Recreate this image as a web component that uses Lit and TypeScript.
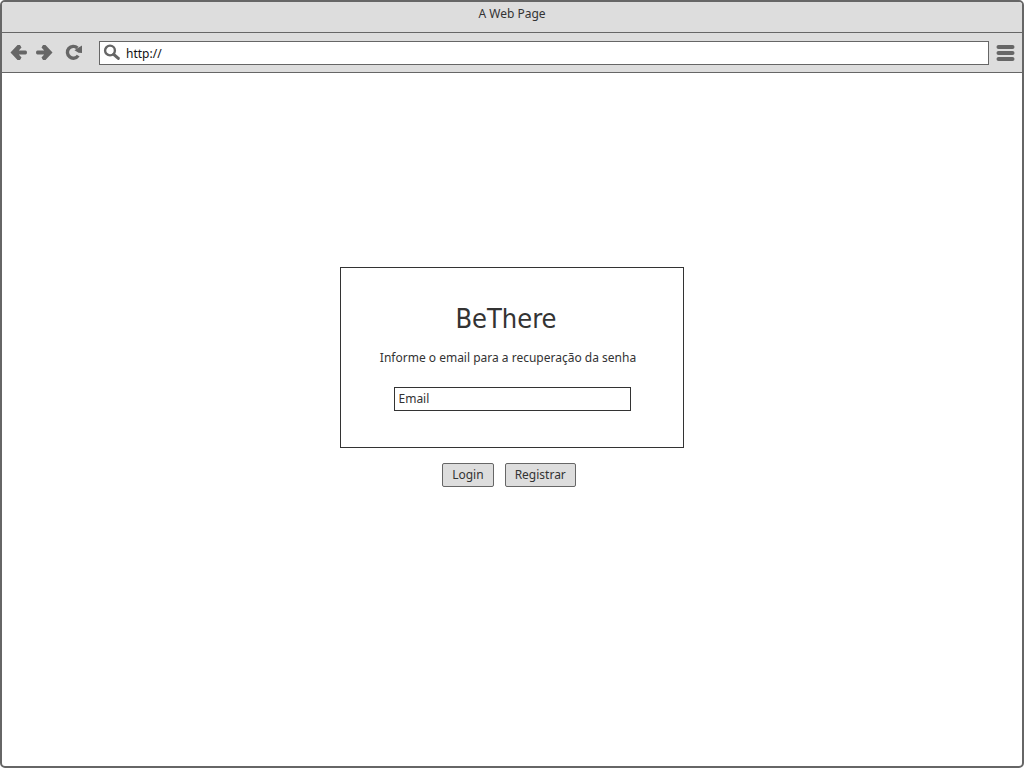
import { LitElement, html, css } from "lit";
import { customElement } from "lit/decorators.js";

@customElement("app-root")
export class AppRoot extends LitElement {
  static styles = css`
    :host {
      display: block;
      font-family: "Noto Sans", "DejaVu Sans", sans-serif;
      font-size: 12px;
      line-height: 16px;
      color: #333;
    }
    * {
      box-sizing: border-box;
    }
    .window {
      display: flex;
      flex-direction: column;
      min-height: 100vh;
      border: 2px solid #666;
      border-radius: 5px;
      background: #fff;
      overflow: hidden;
    }
    .title {
      height: 31px;
      padding-top: 4px;
      text-align: center;
      background: #ddd;
      border-bottom: 1px solid #666;
    }
    .toolbar {
      display: flex;
      align-items: center;
      height: 40px;
      padding: 0 7px;
      background: #ddd;
      border-bottom: 1px solid #666;
    }
    .nav {
      display: flex;
      gap: 5px;
      margin-right: 15px;
    }
    button {
      font: inherit;
      color: inherit;
      cursor: pointer;
    }
    .icon {
      display: flex;
      padding: 0;
      border: 0;
      background: none;
    }
    .icon svg,
    .address svg {
      display: block;
      fill: #666;
    }
    .reload {
      margin-left: 5px;
    }
    .address {
      display: flex;
      flex: 1;
      align-items: center;
      gap: 5px;
      height: 24px;
      margin-right: 7px;
      padding-left: 3px;
      background: #fff;
      border: 1px solid #666;
    }
    input {
      min-width: 0;
      font: inherit;
      color: #333;
      background: none;
    }
    .url {
      flex: 1;
      padding: 2px 0 0;
      border: 0;
      outline: 0;
      color: #111;
    }
    .page {
      display: grid;
      flex: 1;
      grid-template-rows: 194fr auto 279fr;
      justify-items: center;
    }
    .content {
      grid-row: 2;
      width: 344px;
      max-width: 100%;
    }
    .card {
      display: flex;
      flex-direction: column;
      align-items: center;
      padding: 32px 32px 36px;
      border: 1px solid #333;
    }
    .intro {
      margin-bottom: 21px;
      padding-right: 8px;
      text-align: center;
    }
    h1 {
      margin: 0 0 12px;
      padding-right: 4px;
      font-family: "DejaVu Sans Condensed", "DejaVu Sans", sans-serif;
      font-size: 27px;
      line-height: 38px;
      font-weight: 400;
    }
    .hint {
      display: block;
    }
    .email {
      width: 237px;
      max-width: 100%;
      height: 24px;
      padding: 0 4px 1px;
      border: 1px solid #333;
    }
    .email::placeholder {
      color: #333;
      opacity: 1;
    }
    .actions {
      display: flex;
      justify-content: center;
      gap: 11px;
      padding: 15px 6px 0 0;
    }
    .action {
      height: 24px;
      padding: 0 9px;
      background: #ddd;
      border: 1px solid #666;
      border-radius: 2px;
    }
  `;

  render() {
    return html`
      <div class="window">
        <header>
          <div class="title">A Web Page</div>
          <div class="toolbar">
            <div class="nav">
              <button class="icon" aria-label="Voltar">
                <svg width="20" height="20" viewBox="0 0 20 20">
                  <path d="M1.5 9.5 8.5 2H11L12.5 4.5 9.8 7.5H16.5Q18 7.5 18 9.5T16.5 11.5H9.8L12.5 14.5 11 17H8.5Z" />
                </svg>
              </button>
              <button class="icon" aria-label="Avançar">
                <svg width="20" height="20" viewBox="0 0 20 20">
                  <path d="M18.5 9.5 11.5 2H9L7.5 4.5 10.2 7.5H3.5Q2 7.5 2 9.5T3.5 11.5H10.2L7.5 14.5 9 17H11.5Z" />
                </svg>
              </button>
              <button class="icon reload" aria-label="Recarregar">
                <svg width="20" height="20" viewBox="0 0 20 20">
                  <path
                    d="M14.2 12.6A5.9 5.9 0 1 1 13.4 5"
                    fill="none"
                    stroke="#666"
                    stroke-width="3.4"
                  />
                  <path d="M18 2.5V10L14.5 9.7 10.5 7.2 13 5.5Z" />
                </svg>
              </button>
            </div>
            <div class="address">
              <svg width="18" height="18" viewBox="0 0 18 18">
                <circle cx="7" cy="6.5" r="4.9" fill="none" stroke="#666" stroke-width="2.4" />
                <path d="M10.7 10.3 15.3 14.4" stroke="#666" stroke-width="3" stroke-linecap="round" />
              </svg>
              <input class="url" type="text" aria-label="Endereço" value="http://" />
            </div>
            <button class="icon" aria-label="Menu">
              <svg width="19" height="18" viewBox="0 0 19 18">
                <rect x="0.5" y="1" width="18" height="4" rx="2" />
                <rect x="0.5" y="7" width="18" height="4" rx="2" />
                <rect x="0.5" y="13" width="18" height="4" rx="2" />
              </svg>
            </button>
          </div>
        </header>
        <main class="page">
          <form class="content" @submit=${(e: Event) => e.preventDefault()}>
            <div class="card">
              <div class="intro">
                <h1>BeThere</h1>
                <label class="hint" for="email">Informe o email para a recuperação da senha</label>
              </div>
              <input class="email" id="email" type="email" placeholder="Email" />
            </div>
            <div class="actions">
              <button class="action" type="button">Login</button>
              <button class="action" type="button">Registrar</button>
            </div>
          </form>
        </main>
      </div>
    `;
  }
}
